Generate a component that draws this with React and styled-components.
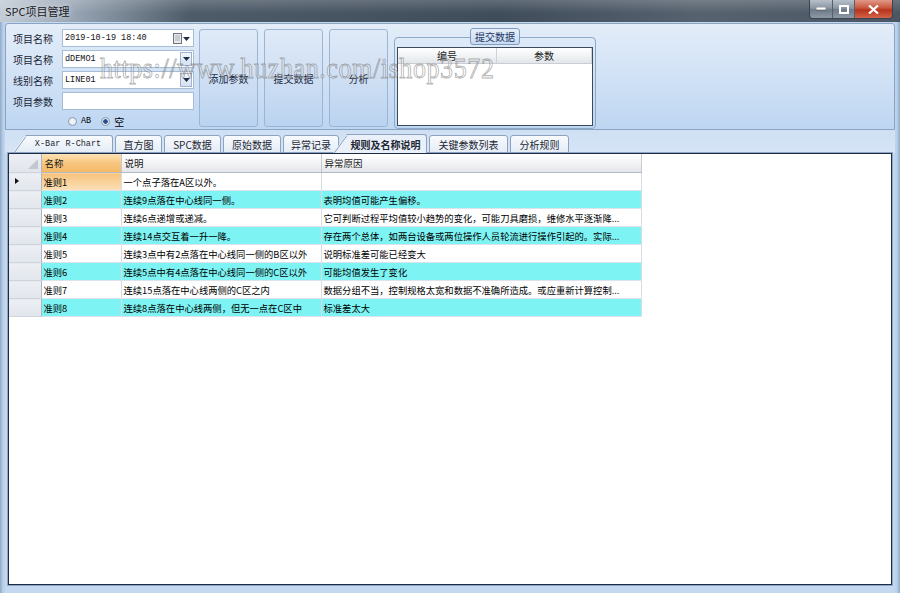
import React from "react";
import styled, { createGlobalStyle } from "styled-components";

const GlobalStyle = createGlobalStyle`
  html, body { margin: 0; padding: 0; }
  body {
    width: 900px;
    height: 593px;
    overflow: hidden;
    font-family: "Noto Sans CJK SC", "Liberation Sans", sans-serif;
    font-size: 10px;
    color: #000;
  }
`;

const rules = [
  ["准则1", "一个点子落在A区以外。", ""],
  ["准则2", "连续9点落在中心线同一侧。", "表明均值可能产生偏移。"],
  ["准则3", "连续6点递增或递减。", "它可判断过程平均值较小趋势的变化，可能刀具磨损，维修水平逐渐降..."],
  ["准则4", "连续14点交互着一升一降。", "存在两个总体，如两台设备或两位操作人员轮流进行操作引起的。实际..."],
  ["准则5", "连续3点中有2点落在中心线同一侧的B区以外", "说明标准差可能已经变大"],
  ["准则6", "连续5点中有4点落在中心线同一侧的C区以外", "可能均值发生了变化"],
  ["准则7", "连续15点落在中心线两侧的C区之内", "数据分组不当，控制规格太宽和数据不准确所造成。或应重新计算控制..."],
  ["准则8", "连续8点落在中心线两侧，但无一点在C区中", "标准差太大"],
];

const tabs = [
  { label: "X-Bar R-Chart", w: 101, mono: true },
  { label: "直方图", w: 47 },
  { label: "SPC数据", w: 57 },
  { label: "原始数据", w: 58 },
  { label: "异常记录", w: 56 },
  { label: "规则及名称说明", w: 94, active: true },
  { label: "关键参数列表", w: 79 },
  { label: "分析规则", w: 59 },
];

const Window = styled.div`
  position: relative;
  width: 900px;
  height: 593px;
  display: flex;
  flex-direction: column;
  background: linear-gradient(90deg, #8fa9c6 0, #b9cfe8 3px, #c4d8ef 6px, #c4d8ef 894px, #b9cfe8 897px, #8fa9c6 100%);
  overflow: hidden;
`;

const TitleBar = styled.div`
  height: 22px;
  flex: none;
  display: flex;
  align-items: center;
  justify-content: space-between;
  padding-left: 5px;
  background:
    linear-gradient(180deg, rgba(255,255,255,0.18) 0, rgba(255,255,255,0) 60%),
    linear-gradient(90deg, #c3ccd6 0, #9aa7b6 70px, #4e5b69 190px, #3f4c5a 500px, #56626f 700px, #4a5663 100%);
`;

const Title = styled.span`
  font-size: 11px;
  color: #1c2128;
  text-shadow: 0 0 6px rgba(255,255,255,0.8);
`;

const WinControls = styled.div`
  align-self: flex-start;
  display: flex;
  margin-right: 7px;
  height: 18px;
  border: 1px solid #3a4450;
  border-top: none;
  border-radius: 0 0 4px 4px;
  overflow: hidden;
`;

const CtrlBtn = styled.div`
  width: ${(p) => p.w}px;
  display: flex;
  align-items: center;
  justify-content: center;
  border-left: ${(p) => (p.first ? "none" : "1px solid #56606c")};
  background: ${(p) =>
    p.close
      ? "linear-gradient(180deg, #e09a88 0, #c9553d 45%, #b8321a 55%, #d0644a 100%)"
      : "linear-gradient(180deg, #b7c0ca 0, #8b96a3 45%, #6e7a88 55%, #8e99a6 100%)"};
`;

const Client = styled.div`
  flex: 1;
  display: flex;
  flex-direction: column;
  margin: 1px 5px 8px 5px;
`;

const TopPanel = styled.div`
  height: 107px;
  flex: none;
  display: flex;
  align-items: flex-start;
  padding: 5px 8px 0 7px;
  box-sizing: border-box;
  border: 1px solid #8aa4c4;
  border-radius: 3px 3px 0 0;
  background: linear-gradient(180deg, #e3edf9 0, #d3e3f6 45%, #bed6f2 100%);
`;

const FormCol = styled.div`
  width: 181px;
  display: flex;
  flex-direction: column;
  gap: 3px;
`;

const FormRow = styled.div`
  height: 18px;
  display: flex;
  align-items: center;
`;

const Label = styled.span`
  width: 49px;
  flex: none;
  font-size: 10px;
  color: #1a2433;
`;

const TextBox = styled.div`
  position: relative;
  width: 132px;
  height: 18px;
  box-sizing: border-box;
  border: 1px solid #a7bcd5;
  background: #fff;
  display: flex;
  align-items: center;
  padding-left: 2px;
  font-family: "Liberation Mono", "DejaVu Sans Mono", monospace;
  font-size: 8.5px;
  color: #111;
`;

const DropBtn = styled.div`
  position: absolute;
  right: 1px;
  top: 1px;
  bottom: 1px;
  width: 12px;
  border: 1px solid #9db3cf;
  box-sizing: border-box;
  background: linear-gradient(180deg, #f2f6fb 0, #d5e1ef 100%);
  display: flex;
  align-items: center;
  justify-content: center;
`;

const CalIcon = styled.div`
  position: absolute;
  right: 3px;
  top: 3px;
  display: flex;
  align-items: center;
  gap: 1px;
`;

const RadioRow = styled.div`
  height: 14px;
  margin-top: 1px;
  padding-left: 55px;
  display: flex;
  align-items: center;
  gap: 4px;
`;

const Radio = styled.span`
  width: 9px;
  height: 9px;
  border-radius: 50%;
  border: 1px solid #8a9bb0;
  background: radial-gradient(circle, ${(p) => (p.checked ? "#2b4f8c 0, #2b4f8c 2px, #dce6f2 2.5px" : "#f5f7fa 0")}, #dce6f2 100%);
  box-sizing: border-box;
`;

const RadioText = styled.span`
  margin-right: 6px;
  font-family: ${(p) => (p.cjk ? '"Noto Sans CJK SC", sans-serif' : '"Liberation Mono", monospace')};
  font-size: ${(p) => (p.cjk ? "10px" : "8.5px")};
`;

const ButtonGroup = styled.div`
  display: flex;
  gap: 6px;
  margin-left: 5px;
`;

const BigButton = styled.div`
  width: 59px;
  height: 98px;
  box-sizing: border-box;
  border: 1px solid #9cb5d4;
  border-radius: 3px;
  background: linear-gradient(180deg, #dfeaf8 0, #cfdff3 50%, #bad3f0 100%);
  display: flex;
  align-items: center;
  justify-content: center;
  font-size: 10px;
  color: #1b2a45;
`;

const GroupBox = styled.div`
  position: relative;
  margin-left: 6px;
  margin-top: 8px;
  width: 202px;
  height: 92px;
  box-sizing: border-box;
  border: 1px solid #8ea8c8;
  border-radius: 4px;
  padding: 9px 2px 2px 2px;
`;

const GroupTitle = styled.div`
  position: absolute;
  left: 75px;
  top: -10px;
  width: 50px;
  height: 17px;
  box-sizing: border-box;
  border: 1px solid #7f9cc2;
  border-radius: 3px;
  background: linear-gradient(180deg, #e6eefa 0, #c9daf0 100%);
  display: flex;
  align-items: center;
  justify-content: center;
  font-size: 10px;
  color: #1d3767;
`;

const ListView = styled.div`
  height: 100%;
  box-sizing: border-box;
  border: 1px solid #3d4a5a;
  background: #fff;
`;

const LvHeader = styled.div`
  display: flex;
  height: 15px;
  background: linear-gradient(180deg, #ffffff 0, #f1f3f5 50%, #e3e6ea 100%);
  border-bottom: 1px solid #c9ced6;
`;

const LvCol = styled.div`
  width: ${(p) => p.w}px;
  box-sizing: border-box;
  border-right: 1px solid #cdd2d9;
  display: flex;
  align-items: center;
  justify-content: center;
  font-size: 10px;
  color: #222;
`;

const TabStrip = styled.div`
  height: 23px;
  flex: none;
  display: flex;
  align-items: flex-end;
  gap: 2px;
  padding-left: 7px;
  box-sizing: border-box;
  background: linear-gradient(180deg, #cfe0f4 0, #d6e5f6 100%);
`;

const Tab = styled.div`
  position: relative;
  width: ${(p) => p.w}px;
  height: ${(p) => (p.active ? 19 : 18)}px;
  box-sizing: border-box;
  margin-left: ${(p) => (p.active ? "-8px" : "0")};
  padding-left: ${(p) => (p.slant ? "12px" : "0")};
  display: flex;
  align-items: center;
  justify-content: center;
  font-family: ${(p) => (p.mono ? '"Liberation Mono", monospace' : '"Noto Sans CJK SC", sans-serif')};
  font-size: ${(p) => (p.mono ? "8.5px" : "10px")};
  font-weight: ${(p) => (p.active ? 700 : 400)};
  color: #1e2632;
  background: ${(p) => (p.active ? "#e9f0fa" : "linear-gradient(180deg, #f8fbfe 0, #e4ecf6 100%)")};
  border: 1px solid #8ca2bf;
  border-bottom: ${(p) => (p.active ? "none" : "1px solid #8ca2bf")};
  border-left: ${(p) => (p.slant ? "none" : "1px solid #8ca2bf")};
  border-radius: 3px 3px 0 0;
  clip-path: ${(p) => (p.slant ? "polygon(14px 0, 100% 0, 100% 100%, 0 100%)" : "none")};
  z-index: ${(p) => (p.active ? 2 : 1)};
`;

const Slant = styled.svg`
  position: absolute;
  left: 0;
  top: 0;
`;

const GridBox = styled.div`
  flex: 1;
  margin: 0 3px;
  border: 1px solid #1c2c47;
  outline: 1px solid #8ea6c4;
  background: #fff;
  overflow: hidden;
`;

const Table = styled.table`
  border-collapse: collapse;
  table-layout: fixed;
  width: 632px;
`;

const Col = styled.col`
  width: ${(p) => p.w}px;
`;

const Th = styled.th`
  height: 18px;
  padding: 0 0 0 3px;
  text-align: left;
  font-weight: 400;
  font-size: 9.5px;
  color: #1a1a1a;
  border-right: 1px solid #c5cad2;
  border-bottom: 1px solid #b3b9c2;
  background: ${(p) =>
    p.hot
      ? "linear-gradient(180deg, #fbe2b6 0, #f7c680 50%, #f4b865 100%)"
      : "linear-gradient(180deg, #ffffff 0, #f3f4f6 50%, #e2e5ea 100%)"};
`;

const RowHead = styled.td`
  height: 17px;
  padding: 0;
  background: linear-gradient(180deg, #eceff4 0, #e1e5ec 100%);
  border-right: 1px solid #aeb6c2;
  border-bottom: 1px solid #cfd4dc;
  position: relative;
`;

const Td = styled.td`
  height: 17px;
  padding: 0 0 0 2px;
  font-size: 9.3px;
  white-space: nowrap;
  overflow: hidden;
  border-right: 1px solid #d6dde4;
  border-bottom: 1px solid #dde3ea;
  background: ${(p) =>
    p.current
      ? "linear-gradient(180deg, #f6c27c 0, #f9d29a 50%, #fbe0b8 100%)"
      : p.alt
      ? "#7df3f3"
      : "#fff"};
`;

const Arrow = styled.span`
  position: absolute;
  left: 6px;
  top: 5px;
  width: 0;
  height: 0;
  border-top: 3.5px solid transparent;
  border-bottom: 3.5px solid transparent;
  border-left: 4px solid #111;
`;

const Corner = styled.span`
  position: absolute;
  right: 3px;
  bottom: 3px;
  width: 0;
  height: 0;
  border-left: 10px solid transparent;
  border-bottom: 10px solid #c3c8d0;
`;

const Watermark = styled.div`
  position: absolute;
  left: 100px;
  top: 52px;
  font-family: "Liberation Serif", serif;
  font-size: 26px;
  letter-spacing: 0.6px;
  color: rgba(255, 255, 255, 0.25);
  -webkit-text-stroke: 0.8px rgba(110, 110, 110, 0.55);
  transform: scaleY(1.15);
  transform-origin: left top;
  pointer-events: none;
  white-space: nowrap;
  z-index: 10;
`;

const DownArrow = () => (
  <svg width="7" height="4" viewBox="0 0 7 4">
    <path d="M0 0h7L3.5 4z" fill="#1f2f48" />
  </svg>
);

export default function App() {
  return (
    <Window>
      <GlobalStyle />
      <TitleBar>
        <Title>SPC项目管理</Title>
        <WinControls>
          <CtrlBtn w={22} first>
            <svg width="10" height="4"><rect x="0" y="0" width="10" height="3" fill="#fff" stroke="#333" strokeWidth="0.5" /></svg>
          </CtrlBtn>
          <CtrlBtn w={21}>
            <svg width="10" height="9"><rect x="1" y="1" width="8" height="7" fill="none" stroke="#fff" strokeWidth="2" /></svg>
          </CtrlBtn>
          <CtrlBtn w={37} close>
            <svg width="11" height="9" viewBox="0 0 11 9">
              <path d="M1 0.5L10 8.5M10 0.5L1 8.5" stroke="#fff" strokeWidth="2.2" />
            </svg>
          </CtrlBtn>
        </WinControls>
      </TitleBar>

      <Client>
        <TopPanel>
          <FormCol>
            <FormRow>
              <Label>项目名称</Label>
              <TextBox>
                2019-10-19 18:40
                <CalIcon>
                  <svg width="9" height="11" viewBox="0 0 9 11">
                    <rect x="0.5" y="0.5" width="8" height="10" fill="#e6e8ea" stroke="#6d7580" />
                    <path d="M2 3h5M2 5h5M2 7h5" stroke="#9aa2ab" strokeWidth="0.8" />
                  </svg>
                  <DownArrow />
                </CalIcon>
              </TextBox>
            </FormRow>
            <FormRow>
              <Label>项目名称</Label>
              <TextBox>
                dDEMO1
                <DropBtn><DownArrow /></DropBtn>
              </TextBox>
            </FormRow>
            <FormRow>
              <Label>线别名称</Label>
              <TextBox>
                LINE01
                <DropBtn><DownArrow /></DropBtn>
              </TextBox>
            </FormRow>
            <FormRow>
              <Label>项目参数</Label>
              <TextBox />
            </FormRow>
            <RadioRow>
              <Radio />
              <RadioText>AB</RadioText>
              <Radio checked />
              <RadioText cjk>空</RadioText>
            </RadioRow>
          </FormCol>

          <ButtonGroup>
            <BigButton>添加参数</BigButton>
            <BigButton>提交数据</BigButton>
            <BigButton>分析</BigButton>
          </ButtonGroup>

          <GroupBox>
            <GroupTitle>提交数据</GroupTitle>
            <ListView>
              <LvHeader>
                <LvCol w={100}>编号</LvCol>
                <LvCol w={96}>参数</LvCol>
              </LvHeader>
            </ListView>
          </GroupBox>
        </TopPanel>

        <TabStrip>
          {tabs.map((t, i) => (
            <Tab key={t.label} w={t.w} active={t.active} mono={t.mono} slant={i === 0 || t.active}>
              {(i === 0 || t.active) && (
                <Slant width="15" height="19" viewBox="0 0 15 19">
                  <path d="M0.5 19L14 0.5" stroke="#8ca2bf" strokeWidth="1" />
                </Slant>
              )}
              {t.label}
            </Tab>
          ))}
        </TabStrip>

        <GridBox>
          <Table>
            <colgroup>
              <Col w={32} />
              <Col w={80} />
              <Col w={200} />
              <Col w={320} />
            </colgroup>
            <thead>
              <tr>
                <RowHead as="th">
                  <Corner />
                </RowHead>
                <Th hot>名称</Th>
                <Th>说明</Th>
                <Th>异常原因</Th>
              </tr>
            </thead>
            <tbody>
              {rules.map((r, i) => (
                <tr key={r[0]}>
                  <RowHead>{i === 0 && <Arrow />}</RowHead>
                  <Td current={i === 0} alt={i % 2 === 1}>{r[0]}</Td>
                  <Td alt={i % 2 === 1}>{r[1]}</Td>
                  <Td alt={i % 2 === 1}>{r[2]}</Td>
                </tr>
              ))}
            </tbody>
          </Table>
        </GridBox>
      </Client>

      <Watermark>https://www.huzhan.com/ishop3572</Watermark>
    </Window>
  );
}
